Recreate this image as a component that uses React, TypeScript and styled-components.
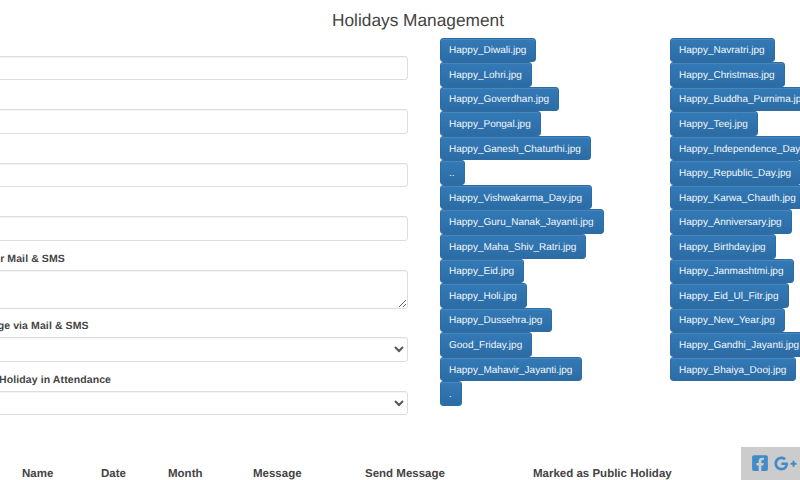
import React from "react";
import styled, { createGlobalStyle } from "styled-components";
import { FaFacebookSquare, FaGooglePlusG } from "react-icons/fa";

const Global = createGlobalStyle`
  html, body { margin: 0; padding: 0; width: 800px; height: 480px; overflow: hidden; background: #fff; }
  body { font-family: "Liberation Sans", Arial, sans-serif; color: #333; text-rendering: geometricPrecision; }
  * { box-sizing: border-box; }
`;

const Page = styled.div`
  width: 800px;
  height: 480px;
  overflow: hidden;
  position: relative;
`;
const Title = styled.h1`
  margin: 0;
  height: 37.5px;
  padding: 10px 0 0 36px;
  font-size: 17.3px;
  line-height: 20px;
  font-weight: 400;
  text-align: center;
  color: #444;
`;
const Columns = styled.div`
  display: flex;
  margin-left: -100px;
  height: 409px;
`;
const Form = styled.form`
  width: 507.5px;
  flex: none;
  margin-right: 32.5px;
  padding-top: 18px;
  display: flex;
  flex-direction: column;
`;
const Field = styled.div<{ $h: number }>`
  height: ${(p) => p.$h}px;
  display: flex;
  flex-direction: column;
  justify-content: flex-end;
`;
const Label = styled.label`
  display: block;
  padding-left: 36px;
  margin-bottom: 4px;
  font-size: 10.5px;
  line-height: 13px;
  font-weight: 700;
  letter-spacing: 0.1px;
  color: #444;
`;
const controlStyle = `
  display: block;
  width: 100%;
  border: 1px solid #ddd;
  border-radius: 3px;
  background: #fff;
  box-shadow: inset 0 1px 1px rgba(0, 0, 0, 0.05);
  font-family: inherit;
  font-size: 11px;
  color: #555;
`;
const Input = styled.input`
  ${controlStyle}
  height: 24.5px;
`;
const TextArea = styled.textarea`
  ${controlStyle}
  height: 39px;
`;
const Select = styled.select`
  ${controlStyle}
  height: 24.5px;
`;
const Files = styled.div`
  width: 230px;
  flex: none;
  display: flex;
  flex-direction: column;
  align-items: flex-start;
`;
const FileButton = styled.button`
  flex: none;
  height: 24.57px;
  padding: 3px 9px 0 8px;
  border: 1px solid #2e6da4;
  border-radius: 3px;
  background: linear-gradient(to bottom, #337ab7 0%, #2c6ca5 100%);
  box-shadow: inset 0 1px 0 rgba(255, 255, 255, 0.1);
  color: #f4f8fb;
  font-family: inherit;
  font-size: 10px;
  line-height: 14px;
  white-space: nowrap;
  text-rendering: geometricPrecision;
`;
const TableHead = styled.div`
  display: grid;
  grid-template-columns: 79px 67px 85px 112px 168px max-content;
  padding: 20px 0 0 22px;
  font-size: 11.5px;
  line-height: 15px;
  font-weight: 700;
  color: #444;
`;
const Social = styled.div`
  position: absolute;
  right: 0;
  bottom: 0;
  width: 59px;
  height: 33px;
  background: #ccc;
  display: flex;
  align-items: center;
  gap: 5px;
  padding: 0 0 1px 10px;
  color: #428bca;
`;

const left = ["Happy_Diwali.jpg","Happy_Lohri.jpg","Happy_Goverdhan.jpg","Happy_Pongal.jpg","Happy_Ganesh_Chaturthi.jpg","..","Happy_Vishwakarma_Day.jpg","Happy_Guru_Nanak_Jayanti.jpg","Happy_Maha_Shiv_Ratri.jpg","Happy_Eid.jpg","Happy_Holi.jpg","Happy_Dussehra.jpg","Good_Friday.jpg","Happy_Mahavir_Jayanti.jpg","."];
const right = ["Happy_Navratri.jpg","Happy_Christmas.jpg","Happy_Buddha_Purnima.jpg","Happy_Teej.jpg","Happy_Independence_Day.jpg","Happy_Republic_Day.jpg","Happy_Karwa_Chauth.jpg","Happy_Anniversary.jpg","Happy_Birthday.jpg","Happy_Janmashtmi.jpg","Happy_Eid_Ul_Fitr.jpg","Happy_New_Year.jpg","Happy_Gandhi_Jayanti.jpg","Happy_Bhaiya_Dooj.jpg"];
const heads = ["Name","Date","Month","Message","Send Message","Marked as Public Holiday"];

export default function App() {
  return (
    <Page>
      <Global />
      <Title>Holidays Management</Title>
      <Columns>
        <Form>
          <Field $h={24.5}><Input /></Field>
          <Field $h={53.5}><Input /></Field>
          <Field $h={53.5}><Input /></Field>
          <Field $h={53.5}><Input /></Field>
          <Field $h={68}><Label>Messages for Mail &amp; SMS</Label><TextArea /></Field>
          <Field $h={53}><Label>Send Message via Mail &amp; SMS</Label><Select><option></option></Select></Field>
          <Field $h={53.5}><Label>Mark Public Holiday in Attendance</Label><Select><option></option></Select></Field>
        </Form>
        <Files>{left.map((f, i) => <FileButton type="button" key={i}>{f}</FileButton>)}</Files>
        <Files>{right.map((f, i) => <FileButton type="button" key={i}>{f}</FileButton>)}</Files>
      </Columns>
      <TableHead>{heads.map((h) => <span key={h}>{h}</span>)}</TableHead>
      <Social>
        <FaFacebookSquare size={18} />
        <FaGooglePlusG size={23} />
      </Social>
    </Page>
  );
}
